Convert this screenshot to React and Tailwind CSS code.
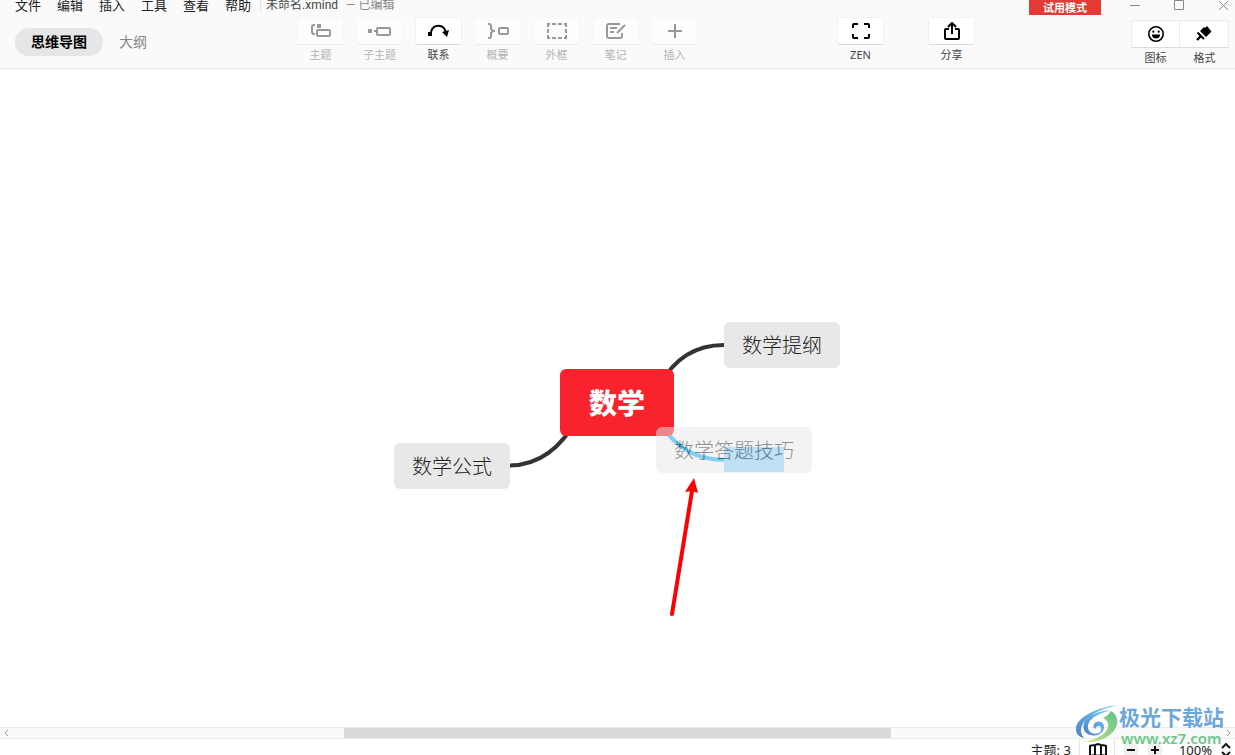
import clsx from "clsx";

const menus = ["文件", "编辑", "插入", "工具", "查看", "帮助"];

function TopicIcon() {
  return (
    <svg width="20" height="16" viewBox="0 0 20 16" fill="none" stroke="currentColor" strokeWidth="2">
      <path d="M4 2H3a2 2 0 0 0-2 2v5a2 2 0 0 0 2 2h1" />
      <rect x="6" y="7" width="13" height="6" rx="1" />
      <rect x="6" y="1" width="4" height="4" fill="currentColor" stroke="none" />
    </svg>
  );
}

function SubtopicIcon() {
  return (
    <svg width="24" height="16" viewBox="0 0 24 16" fill="none" stroke="currentColor" strokeWidth="2">
      <rect x="0" y="6" width="4" height="4" fill="currentColor" stroke="none" />
      <path d="M6 8h3" />
      <rect x="9" y="5" width="13" height="7" rx="1" />
    </svg>
  );
}

function RelationIcon() {
  return (
    <svg width="22" height="16" viewBox="0 0 22 16" fill="none" stroke="currentColor" strokeWidth="2">
      <rect x="0" y="9" width="4" height="4" fill="currentColor" stroke="none" />
      <path d="M3 9C5 1 16 0 18 10" />
      <path d="M14 9l7-2-2 7z" fill="currentColor" stroke="none" />
    </svg>
  );
}

function SummaryIcon() {
  return (
    <svg width="22" height="16" viewBox="0 0 22 16" fill="none" stroke="currentColor" strokeWidth="2">
      <path d="M1 1h1a2 2 0 0 1 2 2v3l2 2-2 2v3a2 2 0 0 1-2 2H1" />
      <path d="M6 8h2" />
      <rect x="12" y="5" width="9" height="6" rx="1" />
    </svg>
  );
}

function BoundaryIcon() {
  return (
    <svg width="20" height="16" viewBox="0 0 20 16" fill="none" stroke="currentColor" strokeWidth="2">
      <path d="M0 1h3M5 1h4M11 1h4M17 1h3M0 15h3M5 15h4M11 15h4M17 15h3" />
      <path d="M1 0v4M1 6v4M1 12v4M19 0v4M19 6v4M19 12v4" />
    </svg>
  );
}

function NoteIcon() {
  return (
    <svg width="20" height="16" viewBox="0 0 20 16" fill="none" stroke="currentColor" strokeWidth="2">
      <path d="M14 1H3a2 2 0 0 0-2 2v10a2 2 0 0 0 2 2h11a2 2 0 0 0 2-2v-3" />
      <path d="M4 5h7M4 9h4" />
      <path d="M11 10l8-8" />
    </svg>
  );
}

function PlusIcon() {
  return (
    <svg width="16" height="16" viewBox="0 0 16 16" fill="none" stroke="currentColor" strokeWidth="2">
      <path d="M8 1v14M1 8h14" />
    </svg>
  );
}

function ZenIcon() {
  return (
    <svg width="18" height="16" viewBox="0 0 18 16" fill="none" stroke="currentColor" strokeWidth="2">
      <path d="M6 1H2a1 1 0 0 0-1 1v3M12 1h4a1 1 0 0 1 1 1v3M1 11v3a1 1 0 0 0 1 1h4M17 11v3a1 1 0 0 1-1 1h-4" />
    </svg>
  );
}

function ShareIcon() {
  return (
    <svg width="16" height="18" viewBox="0 0 16 18" fill="none" stroke="currentColor" strokeWidth="2">
      <path d="M5 7H2a1 1 0 0 0-1 1v8a1 1 0 0 0 1 1h12a1 1 0 0 0 1-1V8a1 1 0 0 0-1-1h-3" />
      <path d="M8 12V2M4 5l4-4 4 4" />
    </svg>
  );
}

function SmileyIcon() {
  return (
    <svg width="16" height="16" viewBox="0 0 16 16" fill="none">
      <circle cx="8" cy="8" r="7.2" stroke="currentColor" strokeWidth="1.6" />
      <path d="M4 8.5h8a4 4 0 0 1-8 0z" fill="currentColor" />
      <circle cx="5.3" cy="5.7" r="1.1" fill="currentColor" />
      <circle cx="10.7" cy="5.7" r="1.1" fill="currentColor" />
    </svg>
  );
}

function BrushIcon() {
  return (
    <svg width="16" height="16" viewBox="0 0 16 16" fill="currentColor">
      <path d="M4 5l4-4 1 1 2-2 4.5 5.5L10 11z" />
      <path d="M1.5 6.5l6.5 6.5" stroke="currentColor" strokeWidth="2" />
      <path d="M5 10l-4 4" stroke="currentColor" strokeWidth="2.4" />
    </svg>
  );
}

const tools = [
  { label: "主题", icon: TopicIcon },
  { label: "子主题", icon: SubtopicIcon },
  { label: "联系", icon: RelationIcon, enabled: true },
  { label: "概要", icon: SummaryIcon },
  { label: "外框", icon: BoundaryIcon },
  { label: "笔记", icon: NoteIcon },
  { label: "插入", icon: PlusIcon },
];

const panels = [
  { label: "图标", icon: SmileyIcon },
  { label: "格式", icon: BrushIcon },
];

function ToolButton({ label, icon: Icon, enabled }) {
  return (
    <button
      type="button"
      disabled={!enabled}
      className={clsx(
        "flex w-[47px] flex-col items-center text-[11px] leading-4",
        enabled ? "text-[#444]" : "text-[#b4b4b4]"
      )}
    >
      <span
        className={clsx(
          "mb-0.5 flex h-7 w-full items-center justify-center rounded-xs border",
          enabled
            ? "border-[#f2f2f2] border-b-[#dcdcdc] bg-white text-black"
            : "border-[#f7f7f7] border-b-[#ececec] bg-[#fdfdfd] text-[#999]"
        )}
      >
        <Icon />
      </span>
      {label}
    </button>
  );
}

function PanelButton({ label, icon: Icon }) {
  return (
    <button
      type="button"
      className="group flex w-[49px] flex-col items-center text-[11px] leading-4 text-[#444]"
    >
      <span className="mb-0.5 flex h-7 w-full items-center justify-center border border-[#ececec] border-b-[#dcdcdc] bg-white text-black group-last:border-l-0">
        <Icon />
      </span>
      {label}
    </button>
  );
}

function TitleBar() {
  return (
    <div className="flex h-[15px] items-start pl-[15px] leading-[11px]">
      <nav className="flex gap-4 text-[13px] text-[#222]">
        {menus.map((menu) => (
          <button key={menu} type="button">
            {menu}
          </button>
        ))}
      </nav>
      <div className="ml-[9px] h-3 w-px bg-[#e4e4e4]" />
      <span className="ml-[5px] font-['Roboto','Noto_Sans_CJK_SC',sans-serif] text-[12px] text-[#444]">
        未命名.xmind
      </span>
      <span className="ml-2 font-['Roboto','Noto_Sans_CJK_SC',sans-serif] text-[12px] text-[#888]">
        — 已编辑
      </span>
      <button
        type="button"
        className="ml-auto h-[15px] w-[72px] bg-[#e53935] text-[11px] leading-[14px] font-bold text-white"
      >
        试用模式
      </button>
      <div className="ml-[29px] flex h-[11px] items-center gap-[33px] pr-[6px] text-[#888]">
        <button type="button" aria-label="最小化">
          <svg width="11" height="11" viewBox="0 0 11 11" stroke="currentColor">
            <path d="M0 5.5h10" />
          </svg>
        </button>
        <button type="button" aria-label="最大化">
          <svg width="11" height="11" viewBox="0 0 11 11" fill="none" stroke="currentColor">
            <path d="M.5.5h9v9h-9z" />
          </svg>
        </button>
        <button type="button" aria-label="关闭">
          <svg width="11" height="11" viewBox="0 0 11 11" stroke="currentColor">
            <path d="M1 1l9 9M10 1l-9 9" />
          </svg>
        </button>
      </div>
    </div>
  );
}

function Toolbar() {
  return (
    <div className="flex h-[53px] items-start pr-1.5 pl-[15px]">
      <div className="mt-[13px] flex w-[282px] items-center gap-4 text-[14px] leading-7">
        <button type="button" className="h-7 rounded-full bg-[#e6e6e6] px-4 font-bold text-black">
          思维导图
        </button>
        <button type="button" className="text-[#888]">
          大纲
        </button>
      </div>
      <div className="mt-0.5 flex gap-3">
        {tools.map((tool) => (
          <ToolButton key={tool.label} {...tool} />
        ))}
      </div>
      <div className="mt-0.5 ml-auto flex gap-11">
        <ToolButton label="ZEN" icon={ZenIcon} enabled />
        <ToolButton label="分享" icon={ShareIcon} enabled />
      </div>
      <div className="mt-[5px] ml-auto flex pl-[17px]">
        {panels.map((panel) => (
          <PanelButton key={panel.label} {...panel} />
        ))}
      </div>
    </div>
  );
}

function Topic({ className, children }) {
  return (
    <div
      className={clsx(
        "absolute h-[46px] rounded-md bg-[#e8e8e8] text-center text-[20px] leading-[48px] font-light whitespace-nowrap text-[#222]",
        className
      )}
    >
      {children}
    </div>
  );
}

function Canvas() {
  return (
    <main className="relative min-h-0 flex-1 overflow-hidden bg-white">
      <svg className="absolute top-0 left-0" width="1235" height="658" fill="none" strokeWidth="4">
        <path d="M660 316C675 288 696 276 724 276" stroke="#333" />
        <path d="M510 396.5C540 396 562 378 578 348" stroke="#333" />
        <path d="M662 357C678 380 696 391 727 391" stroke="#1eb9ff" />
      </svg>
      <div className="absolute top-[378px] left-[724px] h-[25px] w-[60px] bg-[#96dbff]" />
      <div className="absolute top-[300px] left-[560px] flex h-[67px] w-[114px] items-center justify-center rounded-md bg-[#f9232e] text-[28px] font-black text-white">
        数学
      </div>
      <Topic className="top-[253px] left-[724px] w-[116px]">数学提纲</Topic>
      <Topic className="top-[374px] left-[394px] w-[116px]">数学公式</Topic>
      <Topic className="top-[358px] left-[656px] w-[156px] opacity-50">数学答题技巧</Topic>
      <svg className="absolute top-[408px] left-[664px]" width="40" height="144" fill="none">
        <path d="M8 137L28 14" stroke="red" strokeWidth="4" strokeLinecap="round" />
        <path d="M30 1l4 15-6-2-7 1z" fill="red" />
      </svg>
    </main>
  );
}

function ScrollBar() {
  return (
    <div className="flex h-3 shrink-0 items-center justify-between border-y border-[#ebebeb] bg-[#fafafa] px-1 text-[#999]">
      <svg width="5" height="8" viewBox="0 0 5 8" fill="none" stroke="currentColor">
        <path d="M4 1L1 4l3 3" />
      </svg>
      <div className="h-2.5 w-[44.6%] bg-[#d9d9d9]" />
      <svg width="5" height="8" viewBox="0 0 5 8" fill="none" stroke="currentColor">
        <path d="M1 1l3 3-3 3" />
      </svg>
    </div>
  );
}

function StatusBar() {
  return (
    <footer className="flex h-4 shrink-0 items-start justify-end overflow-hidden pr-1 text-[13px] leading-[22px] text-[#222]">
      <span>主题: 3</span>
      <div className="ml-2 h-4 w-px bg-[#e4e4e4]" />
      <button type="button" aria-label="导航" className="ml-[9px] pt-[3px]">
        <svg width="18" height="16" viewBox="0 0 18 16" fill="none" stroke="#111" strokeWidth="2">
          <path d="M1 15V4c2-1 3-1 5-1l3-1 3 1c2 0 3 0 5 1v11M6 3v10M12 3v10M1 14l5-1 3 1 3-1 5 1" />
        </svg>
      </button>
      <div className="ml-[7px] h-4 w-px bg-[#e4e4e4]" />
      <button type="button" aria-label="缩小" className="mt-[3px] ml-2 flex size-4 items-center justify-center rounded-full bg-[#f0f0f0]">
        <svg width="8" height="8" viewBox="0 0 8 8" stroke="#111" strokeWidth="2">
          <path d="M0 4h8" />
        </svg>
      </button>
      <button type="button" aria-label="放大" className="mt-[3px] ml-2 flex size-4 items-center justify-center rounded-full bg-[#f0f0f0]">
        <svg width="8" height="8" viewBox="0 0 8 8" stroke="#111" strokeWidth="2">
          <path d="M0 4h8M4 0v8" />
        </svg>
      </button>
      <button type="button" className="ml-4 flex items-start">
        100%
        <svg className="mt-1 ml-[9px]" width="10" height="14" viewBox="0 0 10 14" fill="none" stroke="#111" strokeWidth="2">
          <path d="M1 5l4-4 4 4M1 9l4 4 4-4" />
        </svg>
      </button>
    </footer>
  );
}

function Watermark() {
  return (
    <div className="pointer-events-none absolute right-[11px] bottom-1.5 flex items-end font-bold">
      <svg className="mb-1.5" width="42" height="38" viewBox="0 0 42 38">
        <defs>
          <linearGradient id="wmBlue" x1="1" y1="0" x2="0" y2="1">
            <stop offset="0" stopColor="#7fd3f7" />
            <stop offset="1" stopColor="#4a80c4" />
          </linearGradient>
          <linearGradient id="wmGreen" x1="1" y1="0" x2="0" y2="1">
            <stop offset="0" stopColor="#5cc389" />
            <stop offset="1" stopColor="#cfe08a" />
          </linearGradient>
        </defs>
        <path d="M42 0C22 2 0 12 0 24c0 5 3 8 8 9-6-7-3-16 8-23C23 5 31 3 42 0z" fill="url(#wmBlue)" />
        <path d="M36 5C24 8 12 13 12 22c0 6 6 8 11 6 3-2 3-6 0-7-2 0-3 1-4 3-2-1-2-3-1-5 3-4 10-3 10 3 0 6-7 10-13 8-6-1-9-6-7-12C11 10 22 6 36 5z" fill="url(#wmBlue)" />
        <path d="M27 13c4-2 6-4 8-7 5 3 7 8 6 13-2 11-17 19-32 18 12-3 22-8 23-15 1-4-1-7-5-9z" fill="url(#wmGreen)" />
      </svg>
      <div className="ml-px">
        <p className="text-[21px] leading-[22px] text-[#6ba7dc]">极光下载站</p>
        <p className="px-0.5 text-[15px] leading-[21px] font-semibold text-[#6cc788]">www.xz7.com</p>
      </div>
    </div>
  );
}

export default function App() {
  return (
    <div className="relative flex h-screen flex-col overflow-hidden bg-white font-['Noto_Sans','Noto_Sans_CJK_SC',sans-serif]">
      <header className="shrink-0 border-b border-[#e4e4e4] bg-[#fafafa]">
        <TitleBar />
        <Toolbar />
      </header>
      <Canvas />
      <ScrollBar />
      <StatusBar />
      <Watermark />
    </div>
  );
}
